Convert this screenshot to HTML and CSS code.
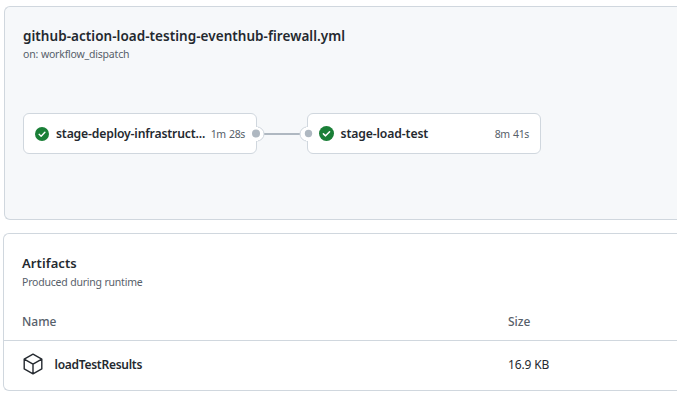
FILE: index.html
```html
<!DOCTYPE html>
<html lang="en">
<head>
<meta charset="utf-8">
<title>Workflow run</title>
<link rel="stylesheet" href="styles.css">
</head>
<body>
<main class="page">
  <section class="panel graph">
    <h2 class="title title-file"><span>github-action-load-testing-eventhub-firewall.yml</span></h2>
    <p class="subtitle subtitle-trigger"><span>on: workflow_dispatch</span></p>
    <div class="flow">
      <div class="job">
        <svg class="check" viewBox="0 0 16 16"><circle cx="8" cy="8" r="8" fill="#1a7f37"/><path d="M4.7 8.4 7 10.5l4.3-4.4" fill="none" stroke="#fff" stroke-width="1.6" stroke-linecap="round" stroke-linejoin="round"/></svg>
        <span class="job-name name-deploy">stage-deploy-infrastruct...</span>
        <span class="job-time">1m 28s</span>
      </div>
      <svg class="link" viewBox="0 0 66 18">
        <path d="M15 9h36" stroke="#afb8c1" stroke-width="2"/>
        <path d="M8 2a7 7 0 0 1 0 14M58 2a7 7 0 0 0 0 14" fill="#fff" stroke="#d0d7de"/>
        <path d="M7 2h2v14H7zM57 2h2v14h-2z" fill="#fff"/>
        <circle cx="7" cy="8.5" r="4" fill="#afb8c1"/><circle cx="59.5" cy="8.5" r="3.7" fill="#afb8c1"/>
      </svg>
      <div class="job">
        <svg class="check" viewBox="0 0 16 16"><circle cx="8" cy="8" r="8" fill="#1a7f37"/><path d="M4.7 8.4 7 10.5l4.3-4.4" fill="none" stroke="#fff" stroke-width="1.6" stroke-linecap="round" stroke-linejoin="round"/></svg>
        <span class="job-name name-test">stage-load-test</span>
        <span class="job-time">8m 41s</span>
      </div>
    </div>
  </section>
  <section class="panel artifacts">
    <h2 class="title title-artifacts"><span>Artifacts</span></h2>
    <p class="subtitle subtitle-produced"><span>Produced during runtime</span></p>
    <div class="row head"><span class="name-head">Name</span><span class="size-head">Size</span></div>
    <div class="row item">
      <div class="file">
        <svg class="cube" viewBox="0 0 20 22"><path d="M10 1.2 18.8 6.1v9.8L10 20.8 1.2 15.9V6.1zM1.2 6.1 10 11.1l8.8-5M10 11.1v9.7" fill="none" stroke="#24292f" stroke-width="1.4" stroke-linejoin="round"/></svg>
        <span class="file-name">loadTestResults</span>
      </div>
      <span class="size">16.9 KB</span>
    </div>
  </section>
</main>
</body>
</html>
```
FILE: styles.css
```css
* { box-sizing: border-box; }
body { margin: 0; background: #fff; color: #24292f; font-family: "Noto Sans", "Open Sans", sans-serif; font-size: 12px; }
.page { width: 677px; height: 400px; overflow: hidden; padding-top: 6px; }
.panel { border: 1px solid #d0d7de; }
.graph { height: 214px; margin-left: 4px; padding: 19px 0 0 18px; background: #f6f8fa; border-right: 0; border-radius: 6px 0 0 6px; }
.title { margin: 0; font-size: 13px; font-weight: 600; line-height: 20px; white-space: nowrap; }
.title-file { font-size: 13.5px; letter-spacing: 0.04px; }
.title-artifacts { letter-spacing: 0.1px; }
.subtitle { margin: 0; font-size: 10.5px; line-height: 16px; letter-spacing: -0.2px; color: #57606a; }
.subtitle-trigger { word-spacing: 0.3px; }
.subtitle-produced { margin-top: 1px; }
.flow { display: flex; margin-top: 51px; align-items: center; }
.job { display: flex; align-items: center; width: 234px; height: 41px; padding: 0 11px; background: #fff; border: 1px solid #d0d7de; border-radius: 6px; white-space: nowrap; }
.check { flex: none; width: 14px; height: 14px; margin-right: 7px; }
.job + .link + .job .check { width: 15px; height: 15px; margin-right: 6.5px; }
.job-name { font-size: 12.2px; font-weight: 600; letter-spacing: -0.16px; }
.name-test { letter-spacing: -0.12px; }
.job-time { margin-left: auto; font-size: 10.5px; letter-spacing: -0.35px; word-spacing: 0.8px; color: #57606a; }
.link { position: relative; z-index: 1; flex: none; width: 66px; height: 18px; margin: 0 -8px; }
.artifacts { height: 158px; margin: 13px 0 0 3px; padding-top: 19px; border-right: 0; border-radius: 6px 0 0 6px; }
.artifacts .title, .artifacts .subtitle { padding-left: 18px; }
.row { display: grid; grid-template-columns: 486px 1fr; align-items: center; padding-left: 18px; }
.head { height: 38px; margin-top: 13px; border-bottom: 1px solid #d0d7de; font-weight: 500; color: #57606a; }
.item { height: 46px; }
.file { display: flex; align-items: center; }
.cube { width: 20px; height: 22px; margin: 0 11.5px 0 1px; }
.file-name { font-weight: 600; letter-spacing: -0.27px; }
.size { letter-spacing: -0.15px; }
```
